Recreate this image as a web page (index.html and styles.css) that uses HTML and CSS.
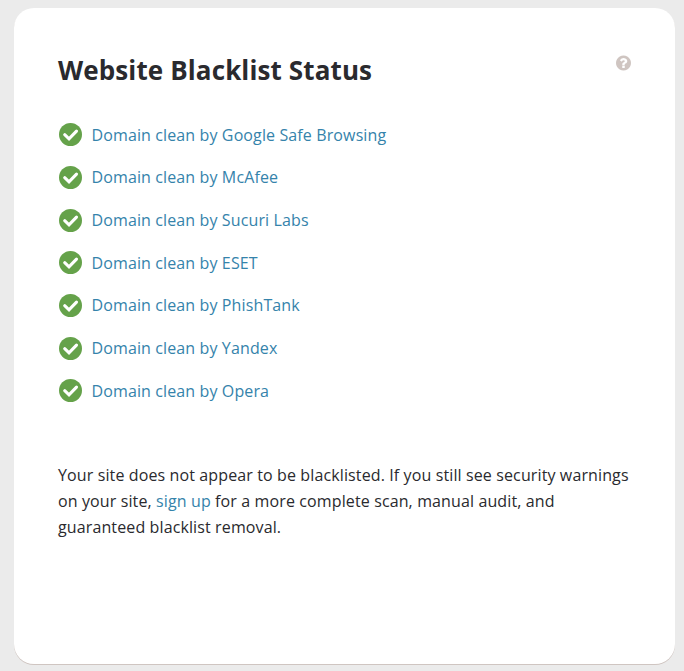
FILE: index.html
```html
<!DOCTYPE html>
<html lang="en">
<head>
    <meta charset="UTF-8">
    <meta name="viewport" content="width=device-width, initial-scale=1.0">
    <title>Website Blacklist Status</title>
    <link rel="stylesheet" href="styles.css">
</head>
<body>
    <svg class="sprite" aria-hidden="true">
        <symbol id="check" viewBox="0 0 23 23">
            <circle cx="11.5" cy="11.5" r="11.5"/>
            <path d="M5.7 11.7l4.3 4.100 7.500-7.700" fill="none" stroke="white" stroke-width="3.100" stroke-linecap="round"/>
        </symbol>
    </svg>
    <div class="card">
        <div class="card-header">
            <h1>Website Blacklist Status</h1>
            <svg class="help" viewBox="128 128 1536 1536">
                <path d="M1024 1376v-192q0-14-9-23t-23-9h-192q-14 0-23 9t-9 23v192q0 14 9 23t23 9h192q14 0 23-9t9-23zM1280 704q0-88-55.500-163t-138.500-116-170-41q-243 0-371 213-15 24 8 42l132 100q7 6 19 6 16 0 25-12 53-68 86-92 34-24 86-24 48 0 85.500 26t37.500 59q0 38-20 61t-68 45q-63 28-115.500 86.500t-52.500 125.500v36q0 14 9 23t23 9h192q14 0 23-9t9-23q0-19 21.500-49.500t54.500-49.500q32-18 49-28.500t46-35 44.500-48 28-60.500 12.500-81zM1664 896q0 209-103 385.500t-279.500 279.500-385.500 103-385.500-103-279.500-279.500-103-385.500 103-385.500 279.500-279.500 385.500-103 385.500 103 279.500 279.500 103 385.500z"/>
            </svg>
        </div>
        <ul class="checks">
            <li><svg><use href="#check"/></svg><a href="#">Domain clean by Google Safe Browsing</a></li>
            <li><svg><use href="#check"/></svg><a href="#">Domain clean by McAfee</a></li>
            <li><svg><use href="#check"/></svg><a href="#">Domain clean by Sucuri Labs</a></li>
            <li><svg><use href="#check"/></svg><a href="#">Domain clean by ESET</a></li>
            <li><svg><use href="#check"/></svg><a href="#">Domain clean by PhishTank</a></li>
            <li><svg><use href="#check"/></svg><a href="#">Domain clean by Yandex</a></li>
            <li><svg><use href="#check"/></svg><a href="#">Domain clean by Opera</a></li>
        </ul>
        <p>Your site does not appear to be blacklisted. If you still see security warnings on your site, <a href="#">sign up</a> for a more complete scan, manual audit, and guaranteed blacklist removal.</p>
    </div>
</body>
</html>
```
FILE: styles.css
```css
* {
    box-sizing: border-box;
}
body {
    margin: 0;
    padding: 8px 9px 7px 14px;
    height: 100vh;
    background: #ebebeb;
    color: #2a2a2e;
    font-family: "Open Sans", sans-serif;
    font-size: 16px;
    line-height: 26px;
    letter-spacing: 0.12px;
}
a {
    color: #3583ab;
    text-decoration: none;
}
.sprite {
    display: none;
}
.card {
    height: 656px;
    padding: 44px;
    background: white;
    border-radius: 20px;
    box-shadow: 0 1px 0 #cfc5c1;
}
.card-header {
    display: flex;
    justify-content: space-between;
}
h1 {
    margin: 0;
    font-size: 26px;
    font-weight: bold;
    line-height: 36px;
}
.help {
    width: 15px;
    height: 16px;
    margin-top: 3px;
    fill: #cfc5c1;
}
.checks {
    list-style: none;
    margin: 25.4px 0 0;
    padding: 0;
}
.checks li {
    display: flex;
    align-items: center;
    height: 42.7px;
}
.checks svg {
    width: 23px;
    height: 23px;
    margin: 0 9.5px 0 1px;
    fill: #65a24a;
}
p {
    margin: 49.6px 0 0;
}
```
